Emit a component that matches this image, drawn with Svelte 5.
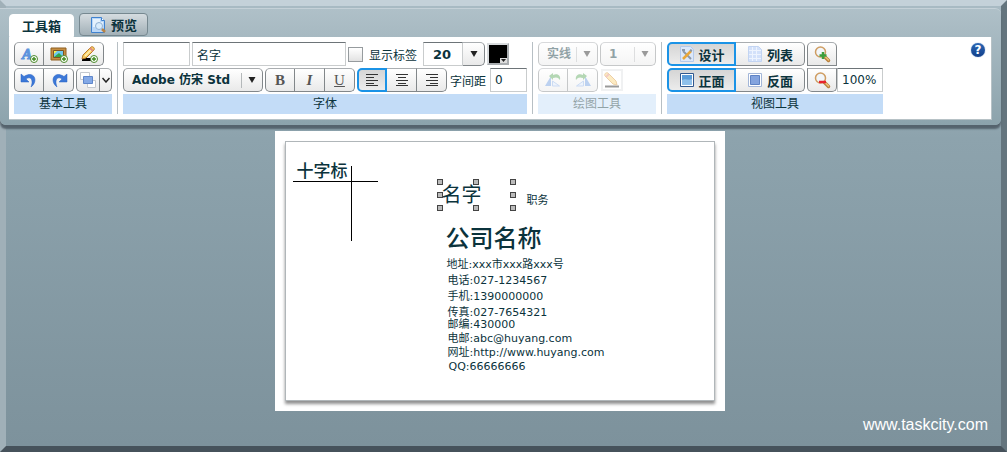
<script lang="ts">
  let preview = $state(false);
  let itemText = $state("名字");
  let itemName = $state("");
  let showLabel = $state(false);
  let fontSize = $state("20");
  let spacing = $state("0");
  let zoom = $state("100%");
  let align = $state("left");
  let mode = $state("design");
  let side = $state("front");

  const aligns = [
    { id: "left", title: "左对齐", d: "M0 .5h12M0 3.5h8M0 6.5h12M0 9.5h8M0 11.5h12" },
    { id: "center", title: "居中", d: "M0 .5h12M2 3.5h8M0 6.5h12M2 9.5h8M0 11.5h12" },
    { id: "right", title: "右对齐", d: "M0 .5h12M4 3.5h8M0 6.5h12M4 9.5h8M0 11.5h12" },
  ];

  // places are relative to the card's inner edge
  const items = [
    { text: "十字标", x: 11, y: 19, size: 17, weight: 500 },
    { text: "名字", x: 156, y: 43, size: 20, weight: 400 },
    { text: "职务", x: 241, y: 49, size: 11, weight: 400 },
    { text: "公司名称", x: 160, y: 87, size: 24, weight: 500 },
    { text: "地址:xxx市xxx路xxx号", x: 161, y: 113, size: 11, weight: 400 },
    { text: "电话:027-1234567", x: 162, y: 129, size: 11, weight: 400 },
    { text: "手机:1390000000", x: 162, y: 145, size: 11, weight: 400 },
    { text: "传真:027-7654321", x: 162, y: 161, size: 11, weight: 400 },
    { text: "邮编:430000", x: 162, y: 173, size: 11, weight: 400 },
    { text: "电邮:abc@huyang.com", x: 162, y: 187, size: 11, weight: 400 },
    { text: "网址:http://www.huyang.com", x: 162, y: 201, size: 11, weight: 400 },
    { text: "QQ:66666666", x: 163, y: 215, size: 11, weight: 400 },
  ];
</script>

{#snippet plus()}
  <circle cx="15" cy="14" r="3.5" fill="#fff" stroke="#4c8a2c" />
  <path d="M15 12v4M13 14h4" stroke="#3f8a1e" stroke-width="1.4" />
{/snippet}

{#snippet arrow()}
  <svg class="arrow" width="8" height="6" viewBox="0 0 8 6"><path d="M.5 0h7L4 6z" fill="currentColor" /></svg>
{/snippet}

{#snippet lens(add: boolean)}
  <svg width="18" height="18" viewBox="0 0 18 18">
    <path d="M10.500 10.500l5 5" stroke="#b9813c" stroke-width="3.500" stroke-linecap="round" />
    <path d="M11.500 11l4 4" stroke="#efc27d" stroke-width="1.500" stroke-linecap="round" />
    <circle cx="7.500" cy="7" r="5" fill="#f2f6fa" stroke="#cf9d62" stroke-width="1.500" />
    {#if add}
      <path d="M10 7v7M6.500 10.500h7" stroke="#3c9e3c" stroke-width="2.500" />
    {:else}
      <path d="M6 11h7" stroke="#e8222c" stroke-width="2.500" />
    {/if}
  </svg>
{/snippet}

<div class="frame">
  <header class="panel">
    <nav class="tabs">
      <button class="tab" class:active={!preview} onclick={() => (preview = false)}>工具箱</button>
      <button class="tab" class:active={preview} onclick={() => (preview = true)}>
        <svg width="18" height="18" viewBox="0 0 18 18">
          <path d="M1.500 1.500h10l3 3v12h-13z" fill="#b9d7f8" stroke="#3f82cf" />
          <path d="M3 3h7v3h3v5H3z" fill="#e4f1fd" />
          <path d="M11.500 1.500v3h3" fill="#fff" stroke="#3f82cf" />
          <circle cx="9" cy="10" r="3.500" fill="#d9ecfc" stroke="#8fb0d3" />
          <path d="M12 13l3 3" stroke="#b98343" stroke-width="2.500" />
        </svg>
        预览
      </button>
    </nav>

    <div class="toolbar">
      <section class="group basic">
        <div class="row">
          <div class="bar">
            <button class="btn" aria-label="添加文字">
              <svg width="20" height="18" viewBox="0 0 20 18">
                <text class="letter" x="3" y="14">A</text>
                {@render plus()}
              </svg>
            </button>
            <button class="btn" aria-label="添加图片">
              <svg width="20" height="18" viewBox="0 0 20 18">
                <path d="M2 3h15v12H2z" fill="#c58e42" stroke="#8f5f21" />
                <path d="M4.500 5.500h10v7h-10z" fill="#6fc8ee" stroke="#7b5420" />
                <path d="M5 6h3l-3 3z" fill="#fff04a" />
                <path d="M5 12l5-4 4 4z" fill="#35a544" />
                {@render plus()}
              </svg>
            </button>
            <button class="btn" aria-label="添加线条">
              <svg width="20" height="18" viewBox="0 0 20 18">
                <path d="M3 14.500h13" stroke="#000" stroke-width="3" />
                <path d="M3 14l1-4 8-8c2-1 4 1 3 3l-8 8z" fill="#f9cf62" stroke="#b87a2a" />
                <path d="M6 11l7-7" stroke="#fff0b5" stroke-width="1.500" />
                <path d="M11 3l3 3" stroke="#e08c80" stroke-width="2" />
                {@render plus()}
              </svg>
            </button>
          </div>
        </div>
        <div class="row">
          <div class="bar">
            <button class="btn" aria-label="撤销">
              <svg width="18" height="16" viewBox="0 0 18 16">
                <path d="M1 2v8h8L6 7C10 4 14 7 11 15 19 9 14-2 4 4.500z" fill="#3c78d8" stroke="#2a62c0" stroke-width=".5" />
              </svg>
            </button>
            <button class="btn" aria-label="重做">
              <svg width="18" height="16" viewBox="0 0 18 16">
                <path d="M17 2v8H9l3-3C8 4 4 7 7 15-1 9 4-2 14 4.500z" fill="#3c78d8" stroke="#2a62c0" stroke-width=".5" />
              </svg>
            </button>
          </div>
          <div class="bar">
            <button class="btn layer" aria-label="层次">
              <svg width="18" height="18" viewBox="0 0 18 18">
                <path d="M1.500 1.500h9v7h-9zM8.500 9.500h8v7h-8z" fill="#fff" stroke="#c4c9cf" />
                <path d="M4.500 5.500h9v7h-9z" fill="#84a9e6" stroke="#5f87cb" />
              </svg>
            </button>
            <button class="btn more" aria-label="更多层次">
              <svg width="8" height="6" viewBox="0 0 8 6"><path d="M.5 1L4 5l3.500-4" fill="none" stroke="#222" stroke-width="1.500" /></svg>
            </button>
          </div>
        </div>
        <h2>基本工具</h2>
      </section>

      <section class="group font">
        <div class="row">
          <input class="field name" aria-label="名称" bind:value={itemName} />
          <input class="field content" aria-label="内容" bind:value={itemText} />
          <label class="check"><input type="checkbox" bind:checked={showLabel} />显示标签</label>
          <div class="bar">
            <input class="field size" aria-label="字号" bind:value={fontSize} />
            <button class="btn drop" aria-label="选择字号">{@render arrow()}</button>
          </div>
          <button class="swatch" aria-label="颜色">
            <svg width="7" height="5" viewBox="0 0 7 5"><path d="M1 1h5L3.500 4z" fill="#222" /></svg>
          </button>
        </div>
        <div class="row">
          <div class="select family">
            <select aria-label="字体"><option>Adobe 仿宋 Std</option></select>
            {@render arrow()}
          </div>
          <div class="bar style">
            <button class="btn"><b>B</b></button>
            <button class="btn"><i>I</i></button>
            <button class="btn"><u>U</u></button>
          </div>
          <div class="bar">
            {#each aligns as a}
              <button class="btn" class:on={align === a.id} aria-label={a.title} onclick={() => (align = a.id)}>
                <svg width="12" height="12" viewBox="0 0 12 12"><path d={a.d} stroke="#333" /></svg>
              </button>
            {/each}
          </div>
          <label class="spacing">字间距<input class="field" bind:value={spacing} /></label>
        </div>
        <h2>字体</h2>
      </section>

      <section class="group draw">
        <div class="row">
          <div class="select line">
            <select aria-label="线型" disabled><option>实线</option></select>
            {@render arrow()}
          </div>
          <div class="select weight">
            <select aria-label="线宽" disabled><option>1</option></select>
            {@render arrow()}
          </div>
        </div>
        <div class="row">
          <div class="bar">
            <button class="btn" aria-label="向左旋转" disabled>
              <svg width="18" height="16" viewBox="0 0 18 16">
                <path d="M1 14h6V4z" fill="#6d9be0" />
                <path d="M8.500 14V9l7 5z" fill="#dbe8fa" stroke="#8db0e6" />
                <path d="M5 4l4-3v2c5-2 8 1 7 5-2-3-4-3-7-2v2z" fill="#5aa85a" />
              </svg>
            </button>
            <button class="btn" aria-label="向右旋转" disabled>
              <svg width="18" height="16" viewBox="0 0 18 16">
                <path d="M17 14h-6V4z" fill="#6d9be0" />
                <path d="M9.500 14V9l-7 5z" fill="#dbe8fa" stroke="#8db0e6" />
                <path d="M13 4L9 1v2C4 1 1 4 2 8c2-3 4-3 7-2v2z" fill="#5aa85a" />
              </svg>
            </button>
          </div>
          <button class="pencil" aria-label="线条颜色" disabled>
            <svg width="16" height="16" viewBox="0 0 16 16">
              <path d="M1 14.500h14" stroke="#222" stroke-width="2" />
              <path d="M13 13l-1-4-8-8C2 0 0 2 1 4l8 8z" fill="#fbd57a" stroke="#d6963c" />
              <path d="M2 5l3-3" stroke="#e58f80" stroke-width="2" />
            </svg>
          </button>
        </div>
        <h2>绘图工具</h2>
      </section>

      <section class="group view">
        <div class="row">
          <div class="bar wide">
            <button class="btn" class:on={mode === "design"} onclick={() => (mode = "design")}>
              <svg width="16" height="16" viewBox="0 0 16 16">
                <path d="M1.500.5h10l3 3v12h-13z" fill="#dce8fa" stroke="#b4c9ea" />
                <path d="M4 5l8 8" stroke="#8c98a8" stroke-width="2" />
                <path d="M4 13l8-8" stroke="#e9a73a" stroke-width="2.500" />
                <path d="M3 4h3M11 4l2 1" stroke="#8c98a8" stroke-width="2" />
              </svg>
              设计
            </button>
            <button class="btn" class:on={mode === "list"} onclick={() => (mode = "list")}>
              <svg width="16" height="16" viewBox="0 0 16 16">
                <path d="M1.500.5h10l3 3v12h-13z" fill="#d3e1fa" stroke="#c2d4f2" />
                <path d="M2 4.500h12M2 8.500h12M2 12.500h12M5.500 1v14M9.500 1v14" stroke="#eef4fe" />
              </svg>
              列表
            </button>
          </div>
          <button class="btn lens top" aria-label="放大">{@render lens(true)}</button>
        </div>
        <div class="row">
          <div class="bar wide">
            <button class="btn" class:on={side === "front"} onclick={() => (side = "front")}>
              <svg width="16" height="16" viewBox="0 0 16 16">
                <path d="M1.500 1.500h13v13h-13z" fill="#fff" stroke="#31588f" />
                <path d="M3 3h10v10H3z" fill="#5a9bd8" />
                <path d="M3 8c4-2 6 1 10-1v6H3z" fill="#8fc0ea" />
              </svg>
              正面
            </button>
            <button class="btn" class:on={side === "back"} onclick={() => (side = "back")}>
              <svg width="16" height="16" viewBox="0 0 16 16">
                <path d="M1.500 1.500h13v13h-13z" fill="#fff" stroke="#a3b6d8" />
                <path d="M3.500 3.500h9v9h-9z" fill="#83a3de" stroke="#5f83c4" />
              </svg>
              反面
            </button>
          </div>
          <div class="bar">
            <button class="btn lens" aria-label="缩小">{@render lens(false)}</button>
            <input class="field zoom" aria-label="缩放" bind:value={zoom} />
          </div>
        </div>
        <h2>视图工具</h2>
      </section>

      <button class="help" aria-label="帮助">?</button>
    </div>
  </header>

  <main class="paper">
    <div class="card">
      <div class="cross-h"></div>
      <div class="cross-v"></div>
      {#each items as item}
        <span
          class="item"
          style="left: {item.x}px; top: {item.y}px; font-size: {item.size}px; font-weight: {item.weight}"
          >{item.text}</span
        >
      {/each}
      <div class="selection">
        {#each [0, 1, 2, 3, 4, 5, 6, 7, 8] as n}
          <span class:handle={n !== 4}></span>
        {/each}
      </div>
    </div>
  </main>

  <footer>www.taskcity.com</footer>
</div>

<style>
  :global(body) {
    margin: 0;
  }

  .frame {
    box-sizing: border-box;
    min-height: 100vh;
    display: flex;
    flex-direction: column;
    border: 6px solid;
    border-color: #c4d1d9 #64757e #46525b #a0b0b8;
    background: linear-gradient(#a8bac3, #8da3ad 30%, #7d929c) padding-box;
    color: #0b333c;
    font-family: "DejaVu Sans", "Noto Sans CJK SC", sans-serif;
    font-size: 12px;
  }

  button,
  input,
  select {
    box-sizing: border-box;
    margin: 0;
    padding: 0;
    color: inherit;
    font: inherit;
  }

  .panel {
    margin: 2px 0 0 -6px;
    padding: 4px 9px 5px 9px;
    border-top: 1px solid #c5d1d8;
    border-radius: 0 6px 6px 6px;
    background: linear-gradient(#afc0c8, #8ca3ac);
    box-shadow: 0 4px 2px #55636d;
  }

  .tabs {
    display: flex;
    align-items: flex-end;
    gap: 5px;
  }

  .tab {
    height: 23px;
    margin-bottom: 1px;
    padding: 0 10px;
    display: flex;
    align-items: center;
    gap: 3px;
    border: 1px solid #768890;
    border-radius: 4px;
    background: linear-gradient(#d5dce0, #a2b0b7);
    font-size: 13px;
    font-weight: bold;
  }

  .tab.active {
    margin-bottom: 0;
    padding: 0 12px;
    border-color: #fff;
    border-radius: 4px 4px 0 0;
    background: #fff;
  }

  .toolbar {
    display: flex;
    padding: 5px 6px 5px 5px;
    border: solid #b7c2c6;
    border-width: 0 1px 1px 0;
    background: #fff;
  }

  .group {
    padding-right: 5px;
    margin-right: 5px;
    border-right: 1px solid #b7bfc4;
  }

  .group.view {
    border: 0;
  }

  .row {
    height: 24px;
    margin-bottom: 2px;
    display: flex;
    align-items: center;
    gap: 2px;
  }

  .bar {
    display: flex;
  }

  h2 {
    height: 20px;
    margin: 0;
    background: #c3dcf7;
    font-size: 12px;
    font-weight: normal;
    line-height: 20px;
    text-align: center;
  }

  .btn {
    width: 30px;
    height: 24px;
    display: flex;
    align-items: center;
    justify-content: center;
    border: 1px solid #82878a;
    border-top-color: #a9adb0;
    border-left-width: 0;
    background: linear-gradient(#fff, #e9e9e9);
    font-weight: bold;
  }

  .btn:first-child {
    border-left-width: 1px;
    border-radius: 5px 0 0 5px;
  }

  .btn:last-child {
    border-radius: 0 5px 5px 0;
  }

  .btn.on {
    border: 2px solid #1b93e6;
    background: linear-gradient(#d5d5d5, #ececec);
  }

  .layer {
    width: 24px;
  }

  .more {
    width: 12px;
  }

  .drop {
    width: 22px;
  }

  .letter {
    fill: #5f94dd;
    stroke: #5f94dd;
    font: italic bold 15px "Liberation Serif", serif;
  }

  .style {
    color: #555;
    font-family: "Liberation Serif", serif;
    font-size: 15px;
  }

  .style i {
    font-weight: bold;
  }

  .style u {
    font-weight: normal;
  }

  .field {
    height: 24px;
    padding: 0 4px;
    border: 1px solid #c9cccd;
    border-top-color: #6d7478;
    background: #fff;
  }

  .name {
    width: 67px;
  }

  .content {
    width: 154px;
  }

  .size {
    width: 40px;
    padding: 0 9px;
    font-size: 13px;
    font-weight: bold;
  }

  .zoom {
    width: 46px;
  }

  .check {
    display: flex;
    align-items: center;
    gap: 6px;
    margin-right: 4px;
  }

  .check input {
    appearance: none;
    width: 15px;
    height: 15px;
    border: 1px solid #969b9e;
    background: linear-gradient(#fff, #e2e2e2);
  }

  .check input:checked {
    background: #4b6670;
  }

  .swatch {
    width: 22px;
    height: 22px;
    display: flex;
    align-items: flex-end;
    justify-content: flex-end;
    border: 2px solid;
    border-color: #d9dcde #a9adb0 #a9adb0 #d9dcde;
    background: #000;
  }

  .swatch svg {
    background: #ddd;
  }

  .select {
    position: relative;
    height: 24px;
  }

  .select select {
    appearance: none;
    width: 100%;
    height: 24px;
    padding: 0 24px 0 8px;
    border: 1px solid #82878a;
    border-top-color: #a9adb0;
    border-radius: 5px;
    background: linear-gradient(#b4b8ba, #b4b8ba) right 20px center / 1px 15px no-repeat,
      linear-gradient(#fff, #e9e9e9);
    font-weight: bold;
    opacity: 1;
  }

  .select .arrow {
    position: absolute;
    top: 9px;
    right: 7px;
    pointer-events: none;
  }

  .arrow {
    color: #222;
  }

  .family {
    width: 140px;
  }

  .line {
    width: 60px;
  }

  .weight {
    width: 56px;
  }

  .spacing {
    display: flex;
    align-items: center;
    gap: 4px;
    margin-left: 1px;
  }

  .spacing .field {
    width: 37px;
  }

  .draw > * {
    opacity: 0.45;
  }

  .pencil {
    width: 22px;
    height: 22px;
    margin-left: 1px;
    display: flex;
    align-items: center;
    justify-content: center;
    border: 2px solid #e0e2e3;
    background: #fff;
  }

  .wide .btn {
    width: 69px;
    gap: 4px;
    font-size: 13px;
  }

  .btn.lens {
    border-left-width: 1px;
    border-radius: 0 0 5px 5px;
  }

  .btn.lens.top {
    border-radius: 5px 5px 0 0;
  }

  .help {
    width: 14px;
    height: 14px;
    margin: 1px 0 0 auto;
    border: 0;
    border-radius: 50%;
    background: linear-gradient(#2a66b4, #123f8a);
    box-shadow: 0 0 1px #2a66b4;
    color: #fff;
    font-weight: bold;
    line-height: 14px;
  }

  .paper {
    align-self: center;
    margin: 6px 0 0 -8px;
    padding: 10px;
    background: #fff;
  }

  .card {
    position: relative;
    box-sizing: border-box;
    width: 430px;
    height: 260px;
    border: 1px solid #b0b6b9;
    background: #fff;
    box-shadow: 0 3px 3px #909090;
  }

  .cross-h,
  .cross-v {
    position: absolute;
    background: #000;
  }

  .cross-h {
    left: 7px;
    top: 39px;
    width: 85px;
    height: 1px;
  }

  .cross-v {
    left: 65px;
    top: 24px;
    width: 1px;
    height: 75px;
  }

  .item {
    position: absolute;
    line-height: 20px;
    white-space: nowrap;
  }

  .selection {
    position: absolute;
    left: 151px;
    top: 37px;
    width: 79px;
    height: 32px;
    display: grid;
    grid-template-columns: repeat(3, 6px);
    grid-template-rows: repeat(3, 6px);
    justify-content: space-between;
    align-content: space-between;
  }

  .handle {
    border: 1px solid #444;
    background: #bbb;
  }

  footer {
    margin-top: auto;
    padding: 0 13px 11px 0;
    color: #fff;
    font-family: "Liberation Sans", sans-serif;
    font-size: 16px;
    line-height: 20px;
    text-align: right;
  }
</style>
